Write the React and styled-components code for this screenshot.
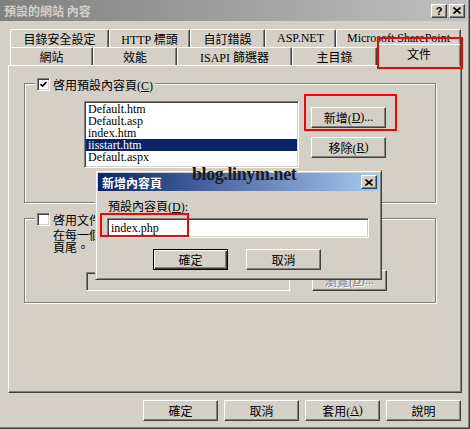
import React from 'react'
import styled, { createGlobalStyle, css } from 'styled-components'

const FACE = '#d4d0c8'

const GlobalStyle = createGlobalStyle`
  html, body { margin: 0; padding: 0; background: ${FACE}; }
  body {
    font-family: "Liberation Serif", "Noto Sans CJK TC", serif;
    font-size: 12px;
    color: #000;
  }
`

const raised = css`
  border: 1px solid;
  border-color: #fff #404040 #404040 #fff;
  box-shadow: inset -1px -1px 0 #808080;
`

const sunken = css`
  border: 1px solid;
  border-color: #808080 #fff #fff #808080;
  box-shadow: inset 1px 1px 0 #404040, inset -1px -1px 0 ${FACE};
`

const Window = styled.div`
  position: relative;
  box-sizing: border-box;
  width: 470px;
  height: 429px;
  background: ${FACE};
  box-shadow: inset -1px -1px 0 #404040, inset -2px -2px 0 #808080;
  display: flex;
  flex-direction: column;
  overflow: hidden;
`

const TitleBar = styled.div`
  display: flex;
  align-items: center;
  height: 21px;
  margin-right: 3px;
  padding: 0 2px 0 4px;
  background: linear-gradient(to right, ${p => p.$from}, ${p => p.$to});
`

const TitleText = styled.span`
  flex: 1;
  font-family: "Noto Sans CJK TC", sans-serif;
  font-weight: bold;
  font-size: 12px;
  color: ${p => p.$color};
  white-space: nowrap;
`

const CaptionButton = styled.span`
  box-sizing: border-box;
  width: 16px;
  height: 14px;
  background: ${FACE};
  ${raised};
  display: flex;
  align-items: center;
  justify-content: center;
  font-family: "Liberation Sans", sans-serif;
  font-weight: bold;
  font-size: 11px;
  & + & { margin-left: 2px; }
`

const TabStrip = styled.div`
  margin: 8px 0 0 10px;
  display: flex;
  flex-direction: column;
`

const TabRow = styled.div`
  display: flex;
  height: 18px;
`

const Tab = styled.div`
  box-sizing: border-box;
  width: ${p => p.$w}px;
  height: 18px;
  display: flex;
  align-items: center;
  justify-content: center;
  background: ${FACE};
  border-top: 1px solid #fff;
  border-left: 1px solid #fff;
  border-right: 1px solid #404040;
  box-shadow: inset -1px 0 0 #808080;
  border-radius: 2px 2px 0 0;
  white-space: nowrap;
  ${p => p.$active && css`
    position: relative;
    z-index: 2;
    height: 22px;
    margin-top: -3px;
    padding-bottom: 3px;
  `}
`

const Panel = styled.div`
  box-sizing: border-box;
  width: 454px;
  height: 328px;
  margin-left: 8px;
  border: 1px solid;
  border-color: #fff #404040 #404040 #fff;
  box-shadow: inset -1px -1px 0 #808080;
  padding: 17px 0 0 15px;
  display: flex;
  flex-direction: column;
`

const GroupBox = styled.div`
  box-sizing: border-box;
  width: 412px;
  border: 1px solid #808080;
  box-shadow: inset 1px 1px 0 #fff, 1px 1px 0 #fff;
  padding-bottom: ${p => p.$pb}px;
  display: flex;
  flex-direction: column;
  & + & { margin-top: 15px; }
`

const Legend = styled.div`
  display: flex;
  align-items: center;
  gap: 3px;
  align-self: flex-start;
  height: 13px;
  margin: -6px 0 0 10px;
  padding: 0 2px;
  background: ${FACE};
  white-space: nowrap;
`

const CheckBox = styled.span`
  box-sizing: border-box;
  width: 13px;
  height: 13px;
  background: #fff;
  ${sunken};
  display: flex;
  align-items: center;
  justify-content: center;
`

const GroupRow = styled.div`
  display: flex;
  align-items: flex-start;
  margin: ${p => p.$mt}px 0 0 ${p => p.$ml}px;
`

const ListBox = styled.div`
  box-sizing: border-box;
  width: 215px;
  height: 67px;
  background: #fff;
  ${sunken};
  padding: 1px;
`

const ListItem = styled.div`
  height: 12px;
  line-height: 12px;
  padding-left: 2px;
  white-space: nowrap;
  ${p => p.$selected && css`
    background: #0a246a;
    color: #fff;
  `}
`

const ButtonColumn = styled.div`
  display: flex;
  flex-direction: column;
  gap: 9px;
  margin: 6px 0 0 12px;
`

const Button = styled.div`
  box-sizing: border-box;
  width: 75px;
  height: 21px;
  margin-left: ${p => p.$ml || 0}px;
  display: flex;
  align-items: center;
  justify-content: center;
  background: ${FACE};
  ${raised};
  white-space: nowrap;
  ${p => p.$default && css`
    border: 1px solid #000;
    box-shadow: inset 1px 1px 0 #fff, inset -1px -1px 0 #404040, inset -2px -2px 0 #808080;
  `}
  ${p => p.$disabled && css`
    color: #808080;
    text-shadow: 1px 1px 0 #fff;
  `}
`

const Description = styled.div`
  margin: 4px 0 0 28px;
  line-height: 12px;
  width: 330px;
`

const TextField = styled.div`
  box-sizing: border-box;
  width: ${p => p.$w}px;
  height: ${p => p.$h}px;
  margin-top: ${p => p.$mt || 0}px;
  background: ${p => (p.$disabled ? FACE : '#fff')};
  ${sunken};
  padding: 0 3px;
  display: flex;
  align-items: center;
`

const ButtonBar = styled.div`
  display: flex;
  justify-content: flex-end;
  gap: 6px;
  margin: 7px 9px 0 0;
`

const Dialog = styled.div`
  position: absolute;
  left: 95px;
  top: 170px;
  z-index: 5;
  box-sizing: border-box;
  width: 287px;
  height: 110px;
  background: ${FACE};
  border: 1px solid;
  border-color: ${FACE} #404040 #404040 ${FACE};
  box-shadow: inset 1px 1px 0 #fff, inset -1px -1px 0 #808080;
  padding: 2px;
  display: flex;
  flex-direction: column;
`

const DialogTitle = styled(TitleBar)`
  height: 18px;
  margin-right: 0;
`

const DialogBody = styled.div`
  display: flex;
  flex-direction: column;
  padding: 10px 0 0 9px;
`

const FieldLabel = styled.div`
  margin-left: 1px;
  line-height: 13px;
`

const DialogButtons = styled.div`
  display: flex;
  gap: 18px;
  margin: 11px 0 0 46px;
`

const Watermark = styled.div`
  position: absolute;
  left: 192px;
  top: 165px;
  z-index: 6;
  font-family: "Liberation Serif", serif;
  font-weight: bold;
  font-size: 18px;
  line-height: 18px;
  letter-spacing: -0.4px;
  color: #1b1b1b;
`

const Mark = styled.div`
  position: absolute;
  z-index: 7;
  box-sizing: border-box;
  left: ${p => p.$x}px;
  top: ${p => p.$y}px;
  width: ${p => p.$w}px;
  height: ${p => p.$h}px;
  border: 2px solid #ff0000;
`

const Check = () => (
  <svg width="7" height="7" viewBox="0 0 7 7">
    <path d="M0.5 3 L2.5 5 L6.5 1" fill="none" stroke="#000" strokeWidth="1.7" />
  </svg>
)

const Cross = () => (
  <svg width="8" height="7" viewBox="0 0 8 7">
    <path d="M0.5 0.5 L7.5 6.5 M7.5 0.5 L0.5 6.5" fill="none" stroke="#000" strokeWidth="1.6" />
  </svg>
)

const backTabs = [
  ['目錄安全設定', 99],
  ['HTTP 標頭', 81],
  ['自訂錯誤', 75],
  ['ASP.NET', 71],
  ['Microsoft SharePoint', 125],
]

const frontTabs = [
  ['網站', 83],
  ['效能', 84],
  ['ISAPI 篩選器', 115],
  ['主目錄', 85],
  ['文件', 84, true],
]

const pages = ['Default.htm', 'Default.asp', 'index.htm', 'iisstart.htm', 'Default.aspx']

export default function App() {
  return (
    <>
      <GlobalStyle />
      <Window>
        <TitleBar $from="#808080" $to="#c0c0c0">
          <TitleText $color="#d4d0c8">預設的網站 內容</TitleText>
          <CaptionButton>?</CaptionButton>
          <CaptionButton><Cross /></CaptionButton>
        </TitleBar>

        <TabStrip>
          <TabRow>
            {backTabs.map(([label, w]) => (
              <Tab key={label} $w={w}>{label}</Tab>
            ))}
          </TabRow>
          <TabRow>
            {frontTabs.map(([label, w, active]) => (
              <Tab key={label} $w={w} $active={active}>{label}</Tab>
            ))}
          </TabRow>
        </TabStrip>

        <Panel>
          <GroupBox $pb={34}>
            <Legend>
              <CheckBox><Check /></CheckBox>
              <span>啓用預設內容頁(<u>C</u>)</span>
            </Legend>
            <GroupRow $mt={10} $ml={59}>
              <ListBox>
                {pages.map(p => (
                  <ListItem key={p} $selected={p === 'iisstart.htm'}>{p}</ListItem>
                ))}
              </ListBox>
              <ButtonColumn>
                <Button>新增(<u>D</u>)...</Button>
                <Button>移除(<u>R</u>)</Button>
              </ButtonColumn>
            </GroupRow>
          </GroupBox>

          <GroupBox $pb={11}>
            <Legend>
              <CheckBox />
              <span>啓用文件頁尾(<u>O</u>)</span>
            </Legend>
            <Description>
              在每一個網頁的底部附加 HTML 格式的<br />頁尾。
            </Description>
            <GroupRow $mt={16} $ml={61}>
              <TextField $w={204} $h={19} $mt={2} $disabled />
              <Button $disabled $ml={22}>瀏覽(<u>B</u>)...</Button>
            </GroupRow>
          </GroupBox>
        </Panel>

        <ButtonBar>
          <Button>確定</Button>
          <Button>取消</Button>
          <Button>套用(<u>A</u>)</Button>
          <Button>說明</Button>
        </ButtonBar>

        <Dialog>
          <DialogTitle $from="#0a246a" $to="#a6caf0">
            <TitleText $color="#fff">新增內容頁</TitleText>
            <CaptionButton><Cross /></CaptionButton>
          </DialogTitle>
          <DialogBody>
            <FieldLabel>預設內容頁(<u>D</u>):</FieldLabel>
            <TextField $w={262} $h={20} $mt={4}>index.php</TextField>
            <DialogButtons>
              <Button $default>確定</Button>
              <Button>取消</Button>
            </DialogButtons>
          </DialogBody>
        </Dialog>

        <Watermark>blog.linym.net</Watermark>

        <Mark $x={377} $y={37} $w={86} $h={32} />
        <Mark $x={304} $y={94} $w={93} $h={37} />
        <Mark $x={100} $y={213} $w={89} $h={24} />
      </Window>
    </>
  )
}
